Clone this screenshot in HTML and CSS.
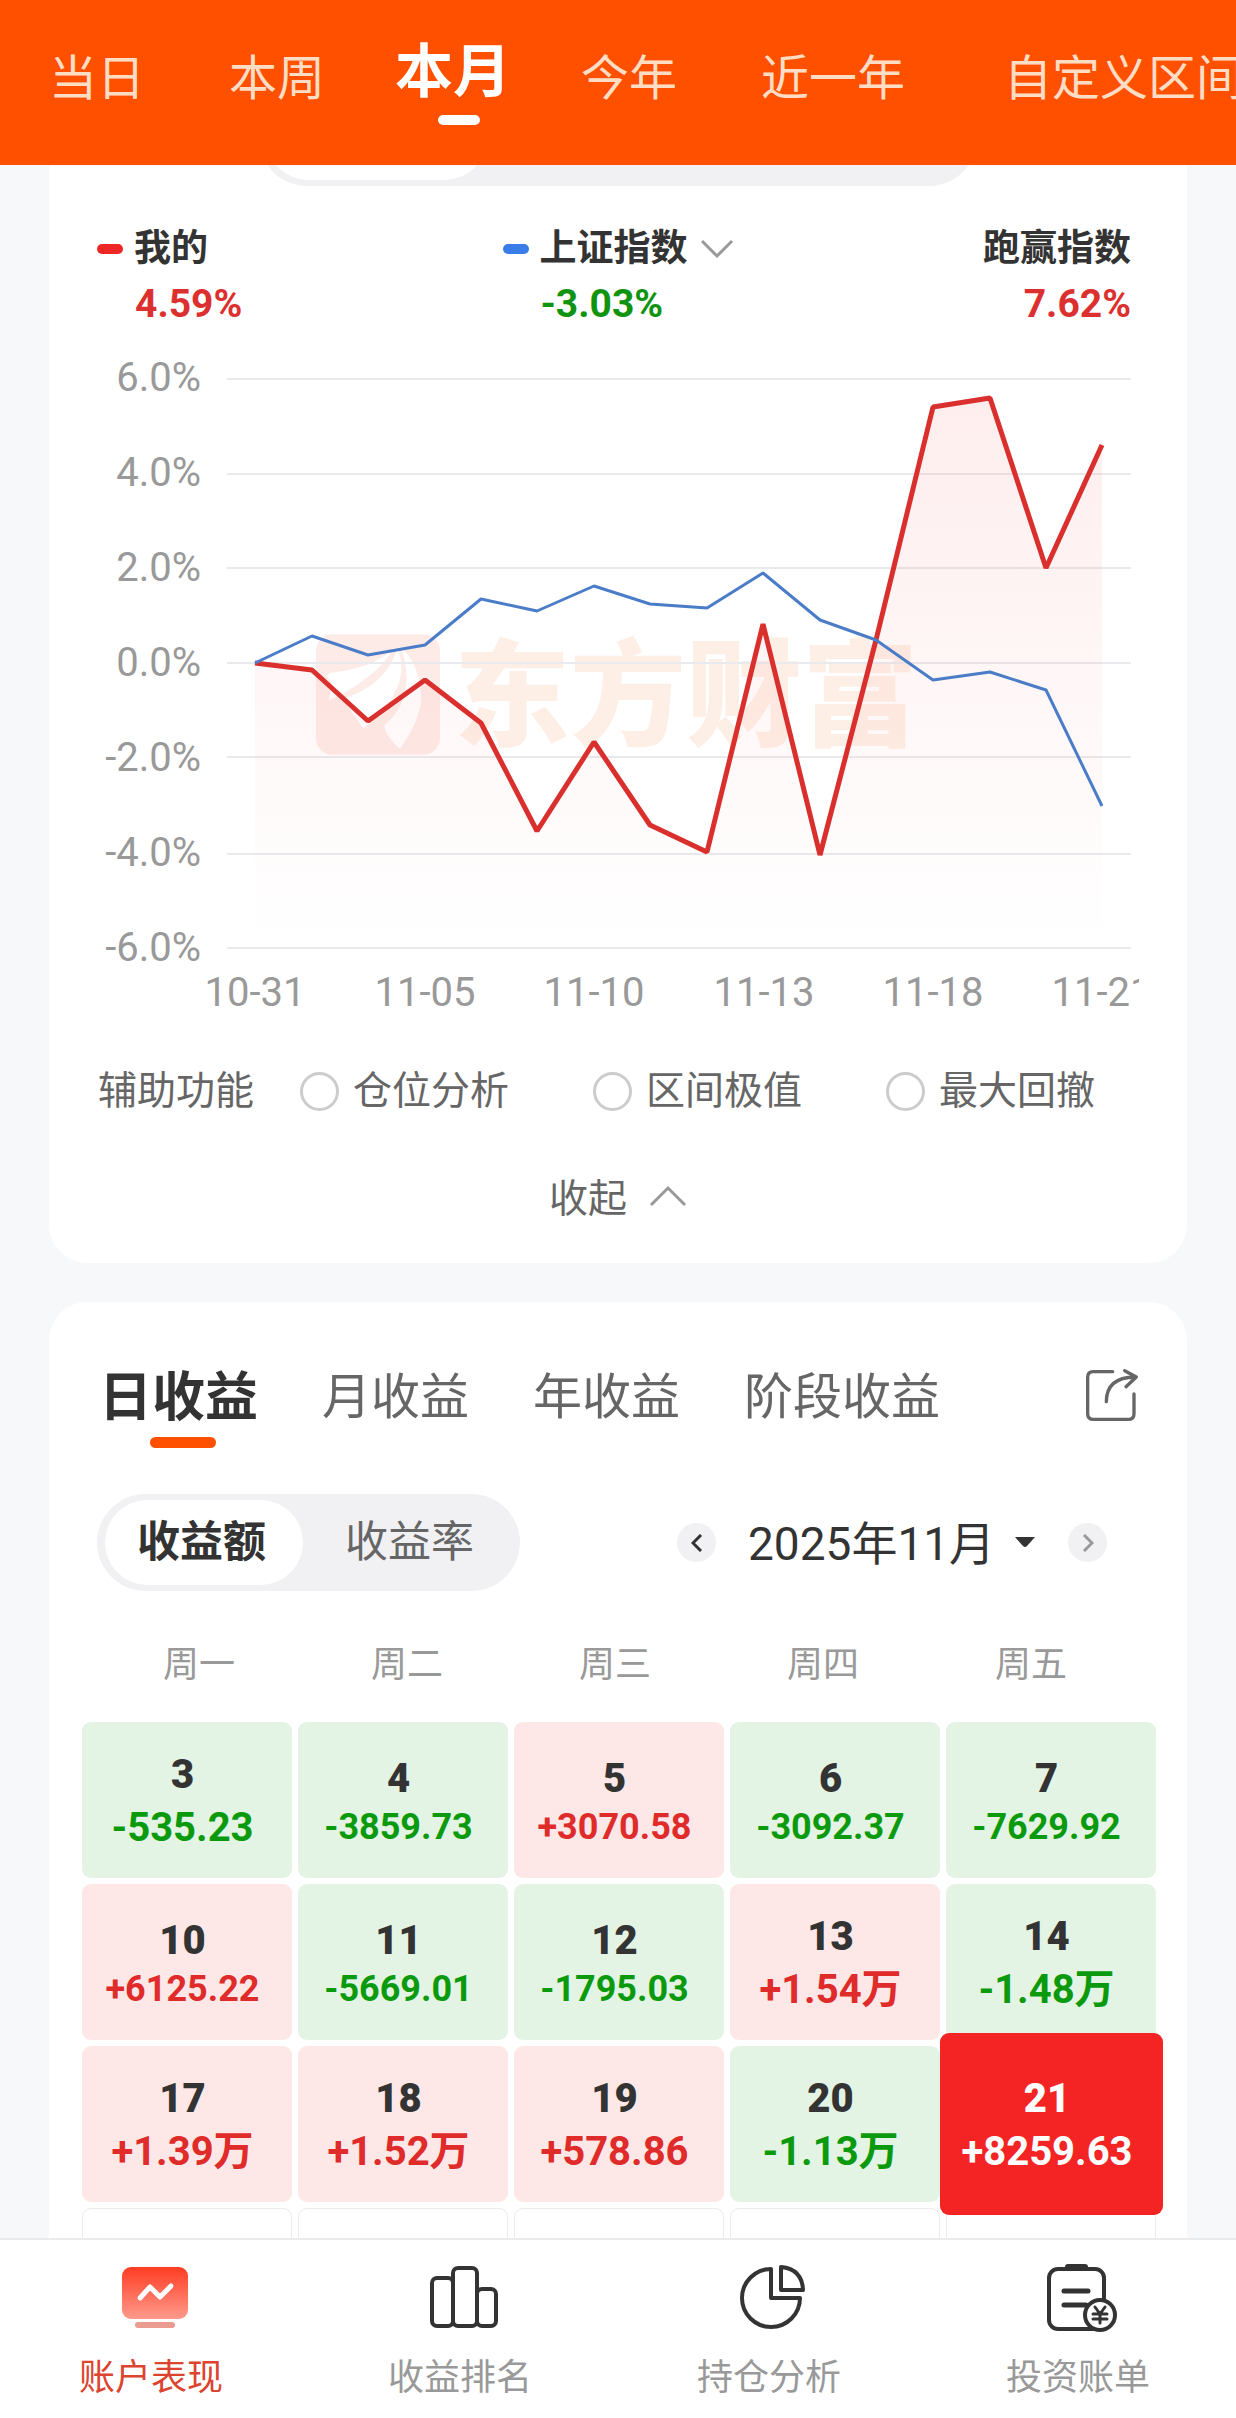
FILE: index.html
```
<!DOCTYPE html>
<html lang="zh-CN">
<head>
<meta charset="UTF-8" />
<meta name="viewport" content="width=device-width, initial-scale=1" />
<title>账户表现</title>
<link rel="stylesheet" href="styles.css">
</head>
<body>
<header class="topbar">
  <button class="range">当日</button>
  <button class="range">本周</button>
  <button class="range active">本月</button>
  <button class="range">今年</button>
  <button class="range">近一年</button>
  <button class="range custom">自定义区间</button>
</header>

<main>
  <section class="card chart-card">
    <div class="mode-switch"><span></span></div>

    <div class="legend">
      <div class="legend-item">
        <div class="name"><i class="dash red"></i>我的</div>
        <div class="value up">4.59%</div>
      </div>
      <div class="legend-item index">
        <button class="name"><i class="dash blue"></i>上证指数
          <svg class="chevron" width="34" height="20" viewBox="0 0 34 20"><path d="M2 2l15 15L32 2" /></svg>
        </button>
        <div class="value down">-3.03%</div>
      </div>
      <div class="legend-item right">
        <div class="name">跑赢指数</div>
        <div class="value up">7.62%</div>
      </div>
    </div>

    <svg class="chart" viewBox="-1 0 1042 670">
      <defs>
        <linearGradient id="area" x1="0" y1="0" x2="0" y2="1">
          <stop offset="0" stop-color="#f42424" stop-opacity=".08" />
          <stop offset="1" stop-color="#f42424" stop-opacity="0" />
        </linearGradient>
      </defs>

      <!-- watermark -->
      <svg x="218" y="284" width="124" height="121" viewBox="48 42 372 362">
        <rect class="mark-bg" x="48" y="42" width="372" height="362" rx="50" />
        <path class="mark-fg" d="M90 158C170 150 240 128 284 80C252 142 170 205 88 240C86 210 110 200 80 168Z" />
        <path class="mark-fg" d="M128 236C205 212 268 165 292 84C326 160 290 245 190 326Z" />
        <path class="mark-fg" d="M302 82C350 120 370 200 361 256C350 310 325 350 300 386C272 362 250 332 254 314C318 262 338 180 302 82Z" />
      </svg>
      <text class="mark-text" x="356" y="387">东方财富</text>

      <g class="grid">
        <path d="M129 29h904M129 124h904M129 218h904M129 313h904M129 407h904M129 504h904M129 598h904" />
      </g>
      <path fill="url(#area)" d="M157 313L214 320L270 371L327 330L383 373L439 481L496 392L552 475L609 502L665 274L722 505L778 290L835 57L892 48L948 218L1004 95V598H157Z" />
      <polyline class="line-mine" points="157,313 214,320 270,371 327,330 383,373 439,481 496,392 552,475 609,502 665,274 722,505 778,290 835,57 892,48 948,218 1004,95" />
      <polyline class="line-index" points="157,313 214,286 270,305 327,295 383,249 439,261 496,236 552,254 609,258 665,223 722,270 778,290 835,330 892,322 948,340 1004,456" />

      <g class="axis-y">
        <text x="103" y="41">6.0%</text>
        <text x="103" y="136">4.0%</text>
        <text x="103" y="231">2.0%</text>
        <text x="103" y="326">0.0%</text>
        <text x="103" y="421">-2.0%</text>
        <text x="103" y="516">-4.0%</text>
        <text x="103" y="611">-6.0%</text>
      </g>
      <g class="axis-x">
        <text x="157" y="656">10-31</text>
        <text x="327" y="656">11-05</text>
        <text x="496" y="656">11-10</text>
        <text x="666" y="656">11-13</text>
        <text x="835" y="656">11-18</text>
        <text x="1004" y="656">11-21</text>
      </g>
    </svg>

    <div class="helpers">
      <span>辅助功能</span>
      <div class="options">
        <label><input type="radio" name="helper" />仓位分析</label>
        <label><input type="radio" name="helper" />区间极值</label>
        <label><input type="radio" name="helper" />最大回撤</label>
      </div>
    </div>

    <button class="collapse">收起
      <svg class="chevron" width="38" height="22" viewBox="0 0 38 22"><path d="M2 20L19 3l17 17" /></svg>
    </button>
  </section>

  <section class="card">
    <div class="tabs">
      <button class="tab active">日收益</button>
      <button class="tab">月收益</button>
      <button class="tab">年收益</button>
      <button class="tab">阶段收益</button>
      <button class="share" aria-label="分享">
        <svg width="54" height="54" viewBox="50 54 162 162">
          <path d="M133 65H75Q58 65 58 82V191Q58 208 75 208H180Q197 208 197 191V132" />
          <path d="M114 155C114 110 140 82 200 81M169 62L204 81L173 110" />
        </svg>
      </button>
    </div>

    <div class="controls">
      <div class="segment">
        <button class="on">收益额</button>
        <button>收益率</button>
      </div>
      <div class="month">
        <button class="step" aria-label="上个月"><svg width="12" height="18" viewBox="0 0 12 18"><path d="M10 1L2 9l8 8" /></svg></button>
        <label class="picker">
          <select aria-label="月份"><option>2025年11月</option></select>
          <svg width="22" height="11" viewBox="0 0 22 11"><path d="M1 0h20L13 9q-2 2-4 0z" /></svg>
        </label>
        <button class="step off" aria-label="下个月"><svg width="12" height="18" viewBox="0 0 12 18"><path d="M2 1l8 8-8 8" /></svg></button>
      </div>
    </div>

    <div class="weekdays">
      <span>周一</span><span>周二</span><span>周三</span><span>周四</span><span>周五</span>
    </div>

    <div class="calendar">
      <button class="day loss"><b>3</b><em>-535.23</em></button>
      <button class="day loss long"><b>4</b><em>-3859.73</em></button>
      <button class="day gain long"><b>5</b><em>+3070.58</em></button>
      <button class="day loss long"><b>6</b><em>-3092.37</em></button>
      <button class="day loss long"><b>7</b><em>-7629.92</em></button>

      <button class="day gain long"><b>10</b><em>+6125.22</em></button>
      <button class="day loss long"><b>11</b><em>-5669.01</em></button>
      <button class="day loss long"><b>12</b><em>-1795.03</em></button>
      <button class="day gain"><b>13</b><em>+1.54万</em></button>
      <button class="day loss"><b>14</b><em>-1.48万</em></button>

      <button class="day gain"><b>17</b><em>+1.39万</em></button>
      <button class="day gain"><b>18</b><em>+1.52万</em></button>
      <button class="day gain"><b>19</b><em>+578.86</em></button>
      <button class="day loss"><b>20</b><em>-1.13万</em></button>
      <button class="day selected"><b>21</b><em>+8259.63</em></button>

      <div class="day empty"></div>
      <div class="day empty"></div>
      <div class="day empty"></div>
      <div class="day empty"></div>
      <div class="day empty"></div>
    </div>
  </section>
</main>

<nav class="bottom-nav">
  <a href="#" class="current">
    <svg width="68" height="68" viewBox="0 0 68 68">
      <defs>
        <linearGradient id="perf" x1="0" y1="0" x2="0" y2="1">
          <stop offset="0" stop-color="#ff3c22" />
          <stop offset="1" stop-color="#ff9a8c" />
        </linearGradient>
      </defs>
      <rect x="1" y="3" width="66" height="52" rx="9" fill="url(#perf)" />
      <path d="M19 34l10-11 10 10 11-11" fill="none" stroke="#fff" stroke-width="5" stroke-linecap="round" stroke-linejoin="round" />
      <rect x="14" y="58" width="40" height="6" rx="3" fill="#eb9c90" />
    </svg>
    <span>账户表现</span>
  </a>
  <a href="#">
    <svg class="line-icon" width="68" height="68" viewBox="0 0 68 68">
      <rect x="2" y="14" width="21" height="48" rx="5" />
      <rect x="23" y="4" width="24" height="58" rx="5" />
      <rect x="47" y="25" width="19" height="37" rx="5" />
    </svg>
    <span>收益排名</span>
  </a>
  <a href="#">
    <svg class="line-icon" width="68" height="68" viewBox="0 0 68 68">
      <path d="M32 5A29 29 0 1 0 61 34H32Z" />
      <path d="M42 3Q63 5 64 26H42Z" />
    </svg>
    <span>持仓分析</span>
  </a>
  <a href="#">
    <svg class="line-icon" width="74" height="68" viewBox="0 0 74 68">
      <rect x="4" y="5" width="55" height="60" rx="9" />
      <path d="M23 3h17" stroke-width="6" />
      <path d="M19 27h24M19 41h22" stroke-width="5" />
      <circle cx="55" cy="51" r="15" fill="#fff" />
      <path d="M50 43l5 7 5-7M55 50v9M48 50h14M48 55h14" stroke-width="3" />
    </svg>
    <span>投资账单</span>
  </a>
</nav>
</body>
</html>
```
FILE: styles.css
```
* { box-sizing: border-box; }
html { overflow: hidden; height: 100%; }
body {
  margin: 0; height: 100%; overflow: hidden; background: #f7f8fa; color: #333;
  font-family: Roboto, "Noto Sans CJK SC", sans-serif;
}
button, select {
  font: inherit; color: inherit; background: none; border: none; padding: 0; margin: 0; cursor: pointer;
}

/* period bar */
.topbar {
  position: fixed; top: 0; left: 0; right: 0; z-index: 10; height: 165px;
  display: flex; overflow: hidden; padding-left: 7px; background: #ff5000;
}
.range {
  flex: none; height: 148px; padding: 0 42px; font-size: 48px; color: #ffdcc4; white-space: nowrap;
}
.range.active {
  position: relative; height: 134px; padding: 0 28px; font-size: 58px; font-weight: 700; color: #fff;
}
.range.active::after {
  content: ""; position: absolute; left: 50%; top: 115px; width: 42px; height: 10px;
  margin-left: -15px; border-radius: 5px; background: #fff;
}
.range.custom { padding-left: 57px; }

main { padding: 90px 49px 0; }
.card {
  background: #fff; border-radius: 38px; padding: 0 48px 44px; margin-bottom: 39px;
}

/* chart card */
.chart-card { border-radius: 0 0 38px 38px; }
.mode-switch {
  width: 718px; height: 96px; margin: 0 auto; padding: 6px 7px; border-radius: 48px; background: #f1f1f4;
}
.mode-switch span {
  display: block; width: 221px; height: 84px; border-radius: 42px; background: #fff;
}
.legend {
  display: grid; grid-template-columns: 1fr auto 1fr; margin-top: 35px; padding-right: 8px;
  font-size: 37px; line-height: 56px; font-weight: 700;
}
.legend .name { display: flex; align-items: center; }
.legend-item.index { padding-left: 8px; }
.legend-item.right { text-align: right; }
.legend-item.right .name { justify-content: flex-end; }
.legend .value { padding-left: 38px; font-size: 39px; line-height: 54px; }
.dash { width: 26px; height: 10px; margin-right: 11px; border-radius: 5px; }
.dash.red { background: #ee2626; }
.dash.blue { background: #3b7de8; }
.chevron { fill: none; stroke: #999; stroke-width: 3; margin-left: 12px; }
.up { color: #dc3030; }
.down { color: #109410; }

.chart { display: block; width: 100%; margin-top: 19px; overflow: hidden; }
.grid path { stroke: #e9eaed; stroke-width: 2; }
.line-mine { fill: none; stroke: #d9302e; stroke-width: 5; stroke-linejoin: bevel; }
.line-index { fill: none; stroke: #4a7cc8; stroke-width: 3; stroke-linejoin: bevel; }
.axis-y, .axis-x { font-size: 40px; fill: #999; }
.axis-y { text-anchor: end; }
.axis-x { text-anchor: middle; }
.mark-bg { fill: #fdebe7; }
.mark-fg { fill: #fff; }
.mark-text { font-size: 116px; font-weight: 900; fill: #feefe6; }

.helpers {
  display: flex; align-items: center; gap: 46px; margin-top: 51px; padding-left: 1px;
  font-size: 39px; line-height: 40px; color: #666; white-space: nowrap;
}
.options { display: flex; gap: 84px; }
.options label { display: flex; align-items: center; gap: 14px; }
.options input {
  appearance: none; width: 39px; height: 39px; margin: 0; border: 3px solid #ccc; border-radius: 50%;
}
.options input:checked { border: 12px solid #ff5000; }
.collapse {
  display: flex; align-items: center; justify-content: center; width: 100%; margin-top: 68px;
  font-size: 39px; line-height: 40px; color: #666;
}
.collapse .chevron { margin: 0 0 6px 22px; }

/* profit card */
.tabs {
  display: flex; align-items: center; gap: 64px; height: 186px; padding-left: 2px;
  font-size: 49px; color: #666; white-space: nowrap;
}
.tab { height: 100%; padding-bottom: 5px; }
.tab.active { position: relative; font-size: 53px; font-weight: 700; color: #333; }
.tab.active::after {
  content: ""; position: absolute; left: 50%; top: 135px; width: 66px; height: 11px;
  margin-left: -29px; border-radius: 6px; background: #ff5000;
}
.share { margin-left: auto; height: 54px; }
.share svg { display: block; fill: none; stroke: #666; stroke-width: 10; stroke-linecap: round; stroke-linejoin: round; }

.controls {
  display: flex; align-items: center; justify-content: space-between; margin-top: 6px; padding-right: 32px;
}
.segment {
  display: flex; padding: 6px 4px 6px 8px; border-radius: 49px; background: #f1f1f4;
  font-size: 43px; line-height: 85px; color: #666;
}
.segment button { padding: 0 42px; border-radius: 43px; }
.segment .on { padding: 0 37px 0 32px; background: #fff; color: #333; font-weight: 700; }
.month { display: flex; align-items: center; gap: 32px; }
.step {
  display: flex; align-items: center; justify-content: center; width: 39px; height: 39px;
  border-radius: 50%; background: #f1f1f4;
}
.step svg { fill: none; stroke: #333; stroke-width: 3; }
.step.off svg { stroke: #999; }
.picker { display: flex; align-items: center; gap: 18px; }
.picker select { appearance: none; font-size: 46px; line-height: 60px; padding-top: 2px; outline: none; }
.picker svg { fill: #333; }

.weekdays {
  display: grid; grid-template-columns: repeat(5, 1fr); margin: 52px 4px 0 -2px;
  font-size: 36px; line-height: 44px; color: #999; text-align: center;
}
.calendar {
  display: grid; grid-template-columns: repeat(5, 1fr); gap: 6px; margin: 35px -17px 0 -15px;
}
.day {
  display: flex; flex-direction: column; align-items: center; justify-content: flex-start;
  height: 156px; padding: 26px 9px 0 0; border-radius: 9px; font-size: 40px; font-weight: 700;
}
.day b { line-height: 54px; color: #333; }
.day em { font-style: normal; line-height: 52px; }
.day.long { padding-top: 30px; }
.day.long em { font-size: 36px; line-height: 42px; }
.day.gain { background: #fde8e7; color: #e02b2b; }
.day.loss { background: #e3f4e4; color: #0b9a0d; }
.day.empty { border: 1px solid #ebebeb; }
.day.selected {
  position: relative; z-index: 1; height: auto; margin: -13px -7px -13px -6px; padding-top: 39px;
  background: #f42424; color: #fff;
}
.day.selected b { color: #fff; }

/* bottom navigation */
.bottom-nav {
  position: fixed; left: 0; right: 0; bottom: 0; z-index: 10;
  display: grid; grid-template-columns: repeat(4, 1fr); padding: 24px 0 18px;
  background: #fff; border-top: 2px solid #ebebeb;
}
.bottom-nav a {
  display: flex; flex-direction: column; align-items: center; gap: 24px;
  font-size: 36px; line-height: 44px; color: #999; text-decoration: none;
}
.bottom-nav span { padding-right: 7px; }
.bottom-nav a.current { color: #dc4430; }
.line-icon { fill: none; stroke: #333; stroke-width: 4; stroke-linecap: round; stroke-linejoin: round; }
```
